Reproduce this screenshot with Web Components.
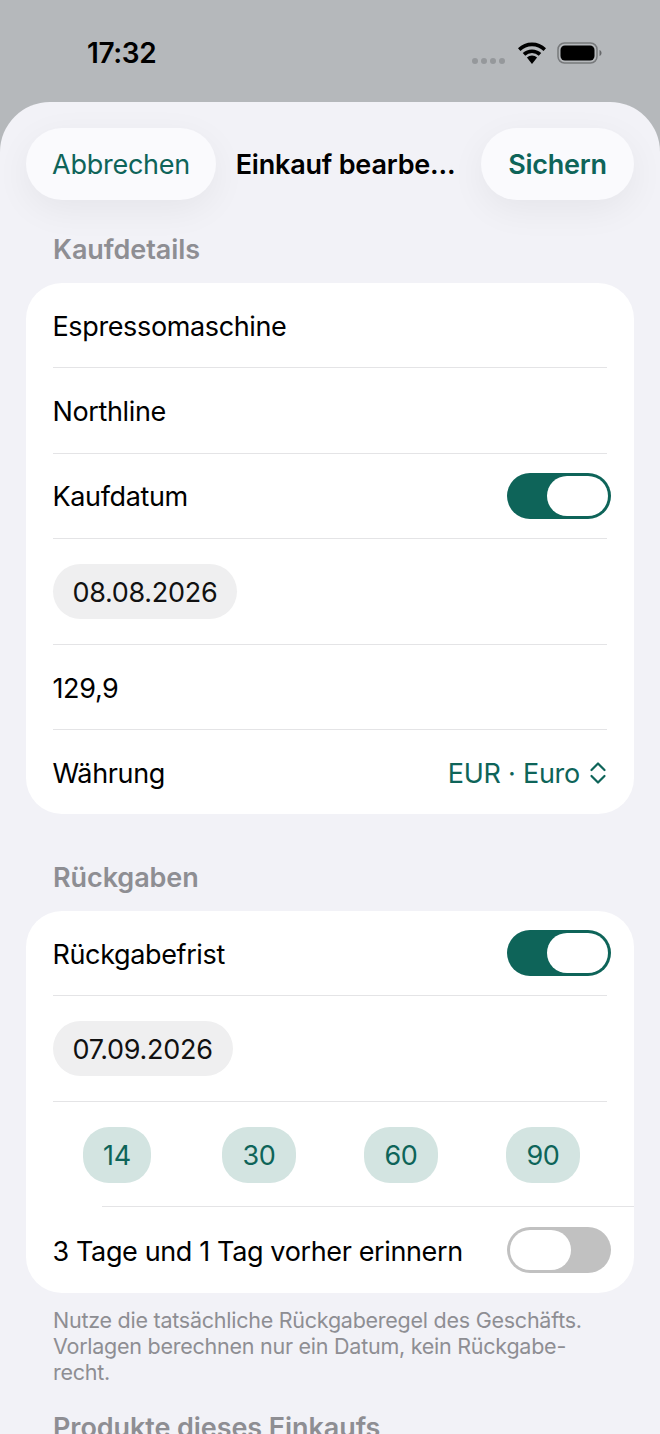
<!DOCTYPE html>
<html lang="de">
<head>
<meta charset="utf-8">
<title>Einkauf bearbeiten</title>
<style>
  html, body {
    margin: 0;
    height: 1434px;
    overflow: hidden;
    background: #b5b8bb;
    font-family: Inter, "Liberation Sans", sans-serif;
    color: #000;
    -webkit-font-smoothing: antialiased;
  }
</style>
</head>
<body>
  <status-bar time="17:32"></status-bar>
  <edit-sheet>
    <sheet-nav slot="nav" heading="Einkauf bearbe..." cancel="Abbrechen" save="Sichern"></sheet-nav>

    <form-section first heading="Kaufdetails">
      <form-row>Espressomaschine</form-row>
      <form-divider></form-divider>
      <form-row>Northline</form-row>
      <form-divider></form-divider>
      <form-row>Kaufdatum<ios-toggle slot="trailing" checked></ios-toggle></form-row>
      <form-divider></form-divider>
      <form-row tall><date-pill>08.08.2026</date-pill></form-row>
      <form-divider></form-divider>
      <form-row>129,9</form-row>
      <form-divider></form-divider>
      <form-row>Währung<currency-picker slot="trailing">EUR · Euro</currency-picker></form-row>
    </form-section>

    <form-section heading="Rückgaben" footer="Nutze die tatsächliche Rückgaberegel des Geschäfts. Vorlagen berechnen nur ein Datum, kein Rückgabe-recht.">
      <form-row>Rückgabefrist<ios-toggle slot="trailing" checked></ios-toggle></form-row>
      <form-divider></form-divider>
      <form-row tall><date-pill>07.09.2026</date-pill></form-row>
      <form-divider></form-divider>
      <chip-row>
        <day-chip>14</day-chip>
        <day-chip>30</day-chip>
        <day-chip>60</day-chip>
        <day-chip>90</day-chip>
      </chip-row>
      <form-divider inset></form-divider>
      <form-row last>3 Tage und 1 Tag vorher erinnern<ios-toggle slot="trailing"></ios-toggle></form-row>
    </form-section>

    <form-section compact heading="Produkte dieses Einkaufs"></form-section>
  </edit-sheet>

<script>
class statusBar extends HTMLElement {
  constructor() {
    super();
    this.attachShadow({ mode: "open" });
  }

  connectedCallback() {
    this.shadowRoot.innerHTML = `<style>
        :host {
          display: flex;
          align-items: center;
          height: 102px;
          box-sizing: border-box;
          padding: 8px 58px 0 87px;
          background: #b5b8bb;
        }
        .time {
          font-size: 28px;
          font-weight: 600;
          letter-spacing: -0.4px;
          line-height: 34px;
          margin-top: -4px;
          flex: 1;
        }
        .dots {
          display: flex;
          gap: 3px;
          margin: 11px 13px 0 0;
        }
        .dots i {
          width: 6px;
          height: 6px;
          border-radius: 50%;
          background: #95989b;
        }
        svg { display: block; margin-top: -4px; }
      </style>
      <div class="time">${this.getAttribute("time")}</div>
      <div class="dots"><i></i><i></i><i></i><i></i></div>
      <svg width="28" height="22" viewBox="0 0 28 22" style="margin-right:11px">
        <path d="M1.2 7.6a18.4 18.4 0 0 1 25.6 0" fill="none" stroke="#000" stroke-width="3.6"/>
        <path d="M6 12.4a11.6 11.6 0 0 1 16 0" fill="none" stroke="#000" stroke-width="3.6"/>
        <path d="M8.9 15.6a7.4 7.4 0 0 1 10.2 0L14 22z" fill="#000"/>
      </svg>
      <svg width="45" height="22" viewBox="0 0 45 22">
        <rect x="1" y="1" width="39" height="20" rx="6.5" fill="none" stroke="#77797b" stroke-width="1.5"/>
        <rect x="3.5" y="3.5" width="34" height="15" rx="4.5" fill="#000"/>
        <path d="M42.5 8v6c1.4-.5 2-1.6 2-3s-.6-2.500-2-3z" fill="#66686a"/>
      </svg>`;
  }
}

class editSheet extends HTMLElement {
  constructor() {
    super();
    this.attachShadow({ mode: "open" });
    this.shadowRoot.innerHTML = `<style>
        :host {
          display: block;
          height: 1332px;
          box-sizing: border-box;
          padding: 26px 26px 0;
          background: #f2f2f7;
          border-radius: 50px 50px 0 0;
          overflow: hidden;
        }
      </style>
      <slot name="nav"></slot>
      <slot></slot>`;
  }
}

class sheetNav extends HTMLElement {
  constructor() {
    super();
    this.attachShadow({ mode: "open" });
  }

  connectedCallback() {
    this.shadowRoot.innerHTML = `<style>
        :host {
          display: flex;
          align-items: center;
          justify-content: space-between;
          height: 72px;
          font-size: 27px;
          line-height: 34px;
        }
        button {
          height: 72px;
          border: none;
          border-radius: 36px;
          background: #fafafd;
          box-shadow: 0 10px 36px rgba(0, 0, 0, 0.055);
          color: #0e6459;
          font: inherit;
          letter-spacing: -0.25px;
        }
        .cancel { width: 190px; padding: 2px 0 0; }
        .save { width: 153px; padding: 2px 0 0; font-weight: 600; }
        h1 {
          margin: 2px 6px 0 0;
          font: inherit;
          font-weight: 600;
          letter-spacing: -0.2px;
          white-space: nowrap;
        }
      </style>
      <button class="cancel">${this.getAttribute("cancel")}</button>
      <h1>${this.getAttribute("heading")}</h1>
      <button class="save">${this.getAttribute("save")}</button>`;
  }
}

class formSection extends HTMLElement {
  constructor() {
    super();
    this.attachShadow({ mode: "open" });
  }

  connectedCallback() {
    const footer = this.getAttribute("footer");
    const hasRows = this.children.length > 0;
    this.shadowRoot.innerHTML = `<style>
        :host {
          display: block;
          padding-top: 46.5px;
        }
        :host([first]) { padding-top: 33px; }
        :host([compact]) { padding-top: 26px; }
        h2 {
          margin: 0 27px 16px;
          font-size: 27px;
          font-weight: 600;
          line-height: 34px;
          letter-spacing: -0.08px;
          color: #8e8e93;
        }
        .card {
          background: #fff;
          border-radius: 36px;
          overflow: hidden;
        }
        p {
          margin: 14px 27px 0;
          font-size: 21.5px;
          line-height: 26px;
          letter-spacing: -0.25px;
          color: #8e8e93;
        }
      </style>
      <h2>${this.getAttribute("heading")}</h2>
      ${hasRows ? `<div class="card"><slot></slot></div>` : ""}
      ${footer ? `<p>${footer}</p>` : ""}`;
  }
}

class formRow extends HTMLElement {
  constructor() {
    super();
    this.attachShadow({ mode: "open" });
    this.shadowRoot.innerHTML = `<style>
        :host {
          display: flex;
          align-items: center;
          justify-content: space-between;
          height: 84.3px;
          padding: 0 27px 0 26.5px;
          font-size: 27px;
          letter-spacing: -0.37px;
          color: #000;
        }
        :host([tall]) { height: 105px; }
        :host([last]) { padding-top: 1px; }
        .label { padding-top: 2px; }
        :host([tall]) .label { padding-top: 0; }
      </style>
      <span class="label"><slot></slot></span>
      <slot name="trailing"></slot>`;
  }
}

class formDivider extends HTMLElement {
  constructor() {
    super();
    this.attachShadow({ mode: "open" });
    this.shadowRoot.innerHTML = `<style>
        :host {
          display: block;
          height: 1px;
          margin: 0 27px;
          background: #e4e4e6;
        }
        :host([inset]) { margin: 0 0 0 76px; }
      </style>`;
  }
}

class iosToggle extends HTMLElement {
  constructor() {
    super();
    this.attachShadow({ mode: "open" });
    this.shadowRoot.innerHTML = `<style>
        :host {
          display: flex;
          justify-content: flex-start;
          width: 104px;
          height: 46px;
          box-sizing: border-box;
          padding: 3px;
          margin-right: -4px;
          border-radius: 23px;
          background: #c1c1c1;
        }
        :host([checked]) {
          justify-content: flex-end;
          background: #0e6459;
        }
        i {
          display: block;
          width: 61px;
          height: 40px;
          border-radius: 20px;
          background: #fff;
        }
      </style>
      <i></i>`;
  }
}

class datePill extends HTMLElement {
  constructor() {
    super();
    this.attachShadow({ mode: "open" });
    this.shadowRoot.innerHTML = `<style>
        :host {
          display: flex;
          align-items: center;
          height: 55px;
          box-sizing: border-box;
          padding: 2px 20px 0;
          border-radius: 28px;
          background: #efeff0;
          font-size: 27px;
          letter-spacing: -0.3px;
          color: #111;
        }
      </style>
      <slot></slot>`;
  }
}

class currencyPicker extends HTMLElement {
  constructor() {
    super();
    this.attachShadow({ mode: "open" });
    this.shadowRoot.innerHTML = `<style>
        :host {
          display: flex;
          align-items: center;
          gap: 9px;
          padding-top: 2px;
          letter-spacing: -0.25px;
          color: #0e6459;
        }
      </style>
      <slot></slot>
      <svg width="18" height="24" viewBox="0 0 18 24" fill="none" stroke="#0e6459" stroke-width="2.2" stroke-linecap="round" stroke-linejoin="round">
        <path d="M2.500 9L9 2.500 15.500 9"/>
        <path d="M2.500 15L9 21.500 15.500 15"/>
      </svg>`;
  }
}

class chipRow extends HTMLElement {
  constructor() {
    super();
    this.attachShadow({ mode: "open" });
    this.shadowRoot.innerHTML = `<style>
        :host {
          display: grid;
          grid-template-columns: repeat(4, 1fr);
          justify-items: center;
          align-items: center;
          height: 104px;
          box-sizing: border-box;
          padding: 2px 20px 0;
        }
      </style>
      <slot></slot>`;
  }
}

class dayChip extends HTMLElement {
  constructor() {
    super();
    this.attachShadow({ mode: "open" });
    this.shadowRoot.innerHTML = `<style>
        :host {
          display: flex;
          align-items: center;
          height: 56px;
          padding: 0 20.5px;
          border-radius: 26px;
          background: #d3e4e1;
          font-size: 27px;
          letter-spacing: -0.3px;
          color: #0e6459;
        }
      </style>
      <slot></slot>`;
  }
}

customElements.define("status-bar", statusBar);
customElements.define("edit-sheet", editSheet);
customElements.define("sheet-nav", sheetNav);
customElements.define("form-section", formSection);
customElements.define("form-row", formRow);
customElements.define("form-divider", formDivider);
customElements.define("ios-toggle", iosToggle);
customElements.define("date-pill", datePill);
customElements.define("currency-picker", currencyPicker);
customElements.define("chip-row", chipRow);
customElements.define("day-chip", dayChip);
</script>
</body>
</html>
